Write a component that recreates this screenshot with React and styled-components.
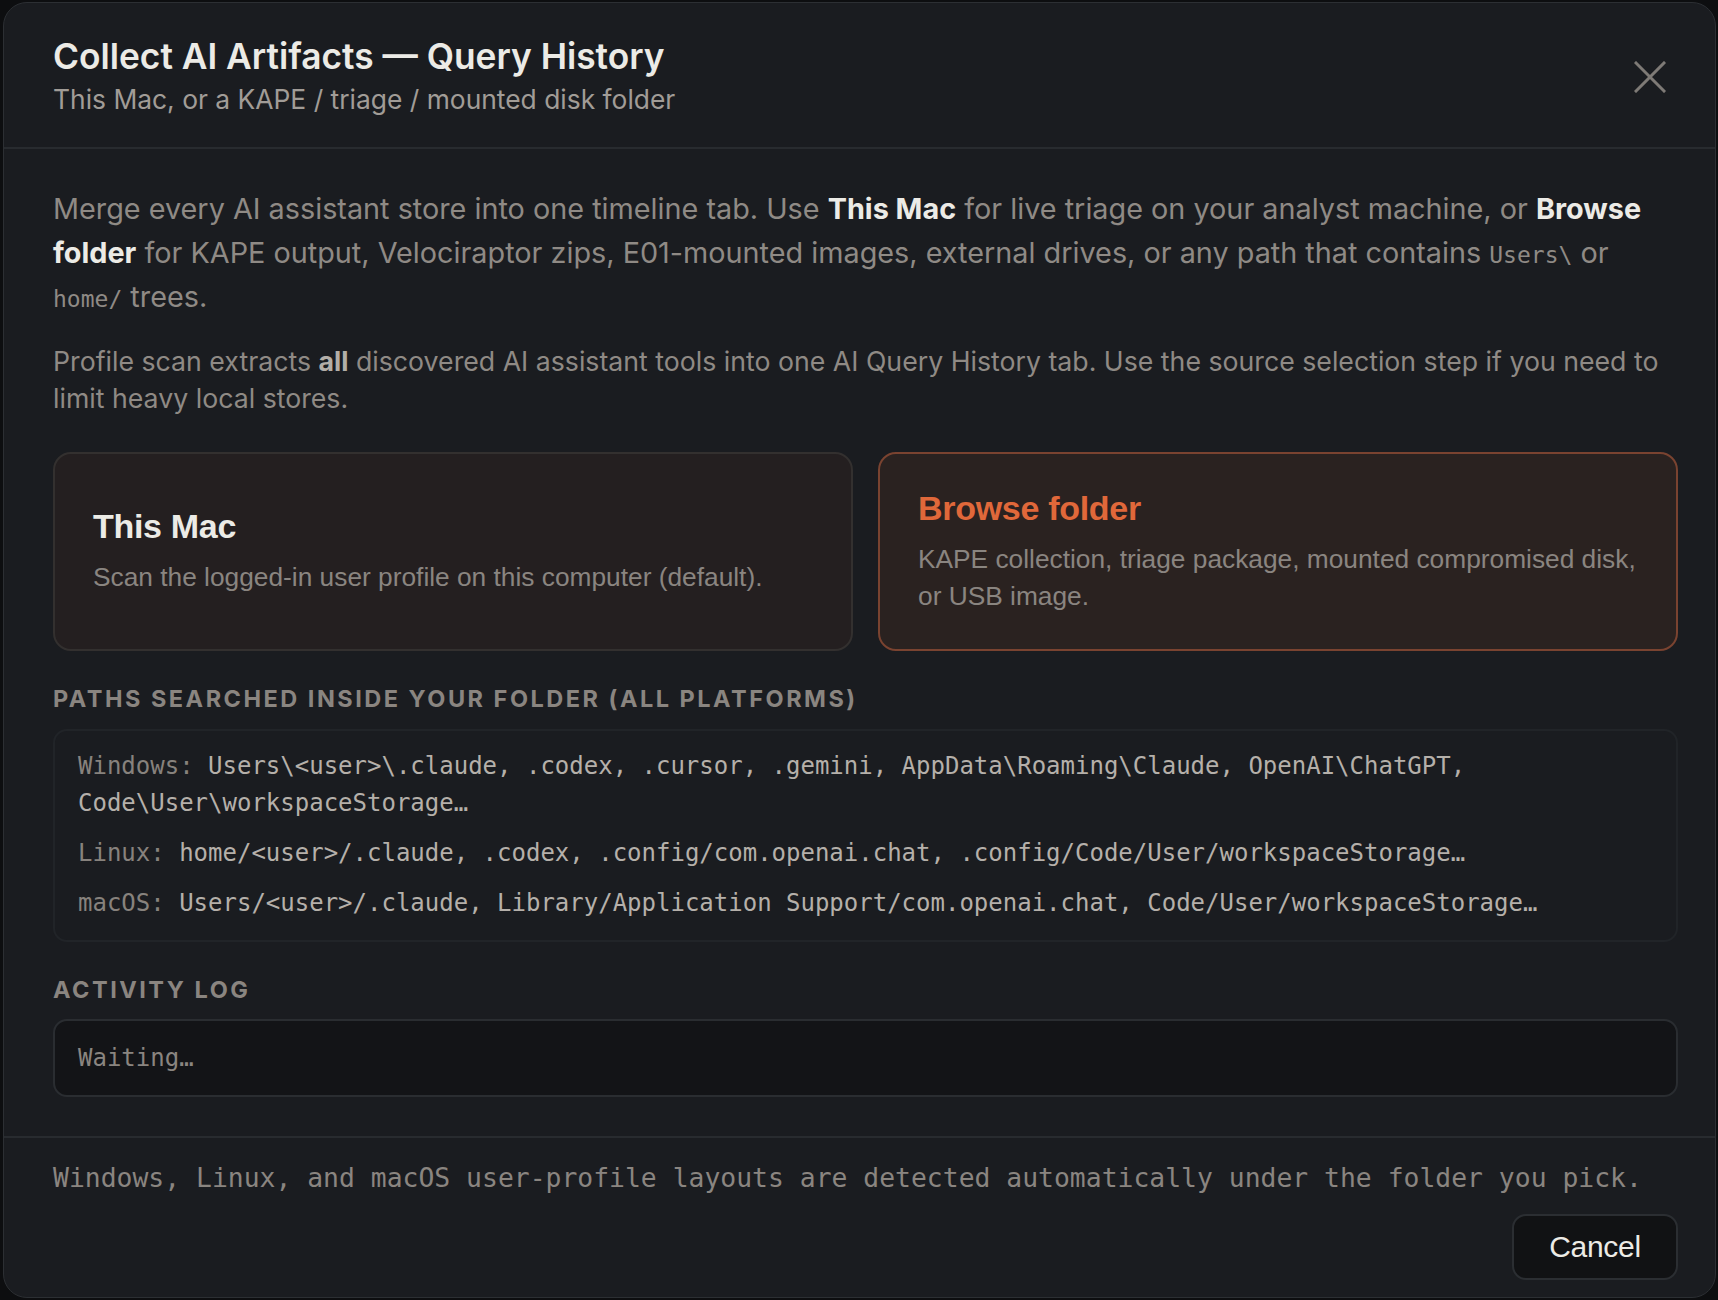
import { useState } from "react";
import styled, { createGlobalStyle } from "styled-components";

const GlobalStyle = createGlobalStyle`
  html, body {
    margin: 0;
    padding: 0;
    background: #0d0e10;
  }
  * { box-sizing: border-box; }
`;

const SANS = `Inter, "Noto Sans", "Liberation Sans", sans-serif`;
const HELV = `"Liberation Sans", Arial, sans-serif`;
const MONO = `"DejaVu Sans Mono", "Liberation Mono", monospace`;

const Page = styled.div`
  width: 1718px;
  height: 1300px;
  padding: 2px 2px 2px 3px;
  display: flex;
`;

const Modal = styled.div`
  flex: 1;
  display: flex;
  flex-direction: column;
  background: #1a1c20;
  border: 1px solid #2c2f33;
  border-radius: 24px;
  overflow: hidden;
`;

const Header = styled.header`
  display: flex;
  align-items: center;
  justify-content: space-between;
  padding: 34px 48px 30px 49px;
  border-bottom: 2px solid #282b2f;
`;

const Titles = styled.div`
  display: flex;
  flex-direction: column;
  gap: 4px;
`;

const Title = styled.h1`
  margin: 0;
  font-family: ${SANS};
  font-weight: 600;
  font-size: 35.3px;
  line-height: 40px;
  color: #ecebe6;
`;

const Subtitle = styled.div`
  font-family: ${SANS};
  font-size: 26.4px;
  line-height: 36px;
  color: #a19c97;
`;

const CloseButton = styled.button`
  background: none;
  border: none;
  padding: 0;
  width: 34px;
  height: 34px;
  display: flex;
  align-items: center;
  justify-content: center;
  cursor: pointer;
  color: #7e7a76;
`;

const Body = styled.div`
  flex: 1;
  padding: 38px 37px 38px 49px;
  display: flex;
  flex-direction: column;
`;

const Lead = styled.p`
  margin: 0;
  font-family: ${SANS};
  font-size: 28.8px;
  line-height: 44px;
  color: #8f8a85;
  strong {
    color: #ecebe6;
    font-weight: 700;
  }
  code {
    font-family: ${MONO};
    font-size: 23px;
    line-height: 0;
    color: #8f8a85;
  }
`;

const Note = styled.p`
  margin: 24px 0 0;
  font-family: ${SANS};
  font-size: 26.7px;
  line-height: 37px;
  color: #8f8a85;
  strong {
    color: #b3aea8;
    font-weight: 700;
  }
`;

const Choices = styled.div`
  margin-top: 35px;
  display: grid;
  grid-template-columns: 1fr 1fr;
  gap: 25px;
`;

const Choice = styled.button`
  height: 199px;
  display: flex;
  flex-direction: column;
  justify-content: center;
  gap: 14px;
  padding: 34px 30px 34px 38px;
  text-align: left;
  border-radius: 18px;
  cursor: pointer;
  background: ${(p) => (p.$active ? "#2a2220" : "#241f20")};
  border: 2px solid ${(p) => (p.$active ? "#7a4330" : "#33302f")};
`;

const ChoiceTitle = styled.div`
  font-family: ${HELV};
  font-weight: 700;
  font-size: 34px;
  line-height: 38px;
  color: ${(p) => (p.$active ? "#e0683a" : "#ecebe6")};
  letter-spacing: -0.3px;
`;

const ChoiceText = styled.div`
  font-family: ${HELV};
  font-size: 26.3px;
  line-height: 37px;
  color: #8a8580;
`;

const SectionLabel = styled.div`
  margin-top: ${(p) => p.$top}px;
  font-family: ${SANS};
  font-weight: 700;
  font-size: 23.5px;
  line-height: 28px;
  letter-spacing: 2.5px;
  text-transform: uppercase;
  color: #8a8580;
`;

const PathBox = styled.div`
  margin-top: 16px;
  padding: 17px 23px 18px 23px;
  border: 2px solid #212428;
  border-radius: 14px;
  display: flex;
  flex-direction: column;
  gap: 13px;
`;

const PathRow = styled.div`
  font-family: ${MONO};
  font-size: 24px;
  line-height: 37px;
  color: #b5b0aa;
  span {
    color: #87827d;
  }
`;

const LogBox = styled.div`
  margin-top: 15px;
  height: 78px;
  padding: 0 23px;
  display: flex;
  align-items: center;
  background: #131417;
  border: 2px solid #2a2d31;
  border-radius: 14px;
  font-family: ${MONO};
  font-size: 24px;
  color: #8a8580;
`;

const Footer = styled.footer`
  border-top: 2px solid #282b2f;
  padding: 22px 37px 17px 49px;
  display: flex;
  flex-direction: column;
  gap: 18px;
`;

const FooterNote = styled.div`
  font-family: ${MONO};
  font-size: 26.4px;
  line-height: 36px;
  color: #8a8580;
`;

const CancelButton = styled.button`
  align-self: flex-end;
  width: 166px;
  height: 66px;
  background: #111214;
  border: 2px solid #2b2e32;
  border-radius: 14px;
  font-family: ${HELV};
  font-size: 30px;
  color: #ecebe6;
  letter-spacing: -0.3px;
  cursor: pointer;
`;

const paths = [
  {
    os: "Windows:",
    value:
      "Users\\<user>\\.claude, .codex, .cursor, .gemini, AppData\\Roaming\\Claude, OpenAI\\ChatGPT, Code\\User\\workspaceStorage…",
  },
  {
    os: "Linux:",
    value:
      "home/<user>/.claude, .codex, .config/com.openai.chat, .config/Code/User/workspaceStorage…",
  },
  {
    os: "macOS:",
    value:
      "Users/<user>/.claude, Library/Application Support/com.openai.chat, Code/User/workspaceStorage…",
  },
];

export default function App() {
  const [source, setSource] = useState("folder");

  return (
    <Page>
      <GlobalStyle />
      <Modal>
        <Header>
          <Titles>
            <Title>Collect AI Artifacts — Query History</Title>
            <Subtitle>This Mac, or a KAPE / triage / mounted disk folder</Subtitle>
          </Titles>
          <CloseButton aria-label="Close">
            <svg width="32" height="32" viewBox="0 0 32 32" fill="none">
              <path
                d="M2 2 L30 30 M30 2 L2 30"
                stroke="currentColor"
                strokeWidth="3"
                strokeLinecap="square"
              />
            </svg>
          </CloseButton>
        </Header>

        <Body>
          <Lead>
            Merge every AI assistant store into one timeline tab. Use{" "}
            <strong>This Mac</strong> for live triage on your analyst machine, or{" "}
            <strong>Browse folder</strong> for KAPE output, Velociraptor zips,
            E01-mounted images, external drives, or any path that contains{" "}
            <code>Users\</code> or <code>home/</code> trees.
          </Lead>
          <Note>
            Profile scan extracts <strong>all</strong> discovered AI assistant tools
            into one AI Query History tab. Use the source selection step if you need
            to limit heavy local stores.
          </Note>

          <Choices>
            <Choice $active={source === "mac"} onClick={() => setSource("mac")}>
              <ChoiceTitle $active={source === "mac"}>This Mac</ChoiceTitle>
              <ChoiceText>
                Scan the logged-in user profile on this computer (default).
              </ChoiceText>
            </Choice>
            <Choice $active={source === "folder"} onClick={() => setSource("folder")}>
              <ChoiceTitle $active={source === "folder"}>Browse folder</ChoiceTitle>
              <ChoiceText>
                KAPE collection, triage package, mounted compromised disk, or USB
                image.
              </ChoiceText>
            </Choice>
          </Choices>

          <SectionLabel $top={34}>Paths searched inside your folder (all platforms)</SectionLabel>
          <PathBox>
            {paths.map((p) => (
              <PathRow key={p.os}>
                <span>{p.os}</span> {p.value}
              </PathRow>
            ))}
          </PathBox>

          <SectionLabel $top={34}>Activity log</SectionLabel>
          <LogBox>Waiting…</LogBox>
        </Body>

        <Footer>
          <FooterNote>
            Windows, Linux, and macOS user-profile layouts are detected automatically
            under the folder you pick.
          </FooterNote>
          <CancelButton>Cancel</CancelButton>
        </Footer>
      </Modal>
    </Page>
  );
}
